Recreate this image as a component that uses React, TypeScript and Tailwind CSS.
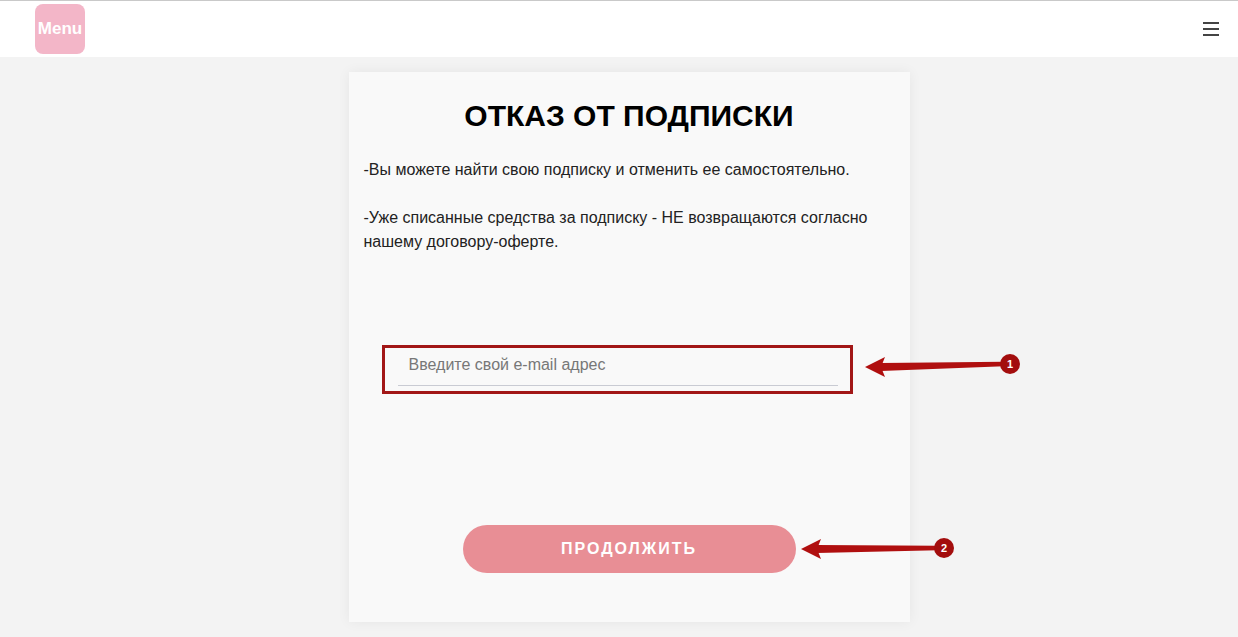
import React from 'react'

const font = { fontFamily: '"Liberation Sans", Arial, sans-serif' }

const Arrow = ({ tipX, tipY, badgeX, badgeY, label }) => {
  const hx = tipX + 20
  return (
    <g>
      <polygon
        points={`${hx - 4},${tipY - 4} ${badgeX - 6},${badgeY - 2.2} ${badgeX - 6},${badgeY + 2.2} ${hx - 4},${tipY + 4}`}
        fill="#b00f0f"
      />
      <polygon
        points={`${tipX},${tipY} ${hx},${tipY - 10} ${hx - 4},${tipY} ${hx},${tipY + 10}`}
        fill="#b00f0f"
      />
      <circle cx={badgeX} cy={badgeY} r="10" fill="#a30d0d" />
      <text
        x={badgeX}
        y={badgeY + 4}
        textAnchor="middle"
        fontSize="11"
        fontWeight="bold"
        fill="#fff"
        fontFamily="Liberation Sans, Arial, sans-serif"
      >
        {label}
      </text>
    </g>
  )
}

const App = () => {
  return (
    <div
      className="relative min-h-screen border-t border-[#c9c9c9] bg-[#f3f3f3]"
      style={font}
    >
      <header className="flex h-[56px] items-center justify-between bg-white pl-[35px] pr-[19px]">
        <div className="flex h-[50px] w-[50px] items-center justify-center rounded-[8px] bg-[#f3b6c8]">
          <span className="text-[17px] font-bold text-white">Menu</span>
        </div>
        <button className="flex w-[16px] flex-col gap-[4.5px]">
          <span className="h-[1.5px] w-full bg-[#444]" />
          <span className="h-[1.5px] w-full bg-[#444]" />
          <span className="h-[1.5px] w-full bg-[#444]" />
        </button>
      </header>

      <div className="flex justify-center pl-[20px] pt-[15px]">
        <main className="flex h-[550px] w-[561px] flex-col bg-[#f9f9f9] px-[15px] shadow-[0_0_12px_rgba(0,0,0,0.06)]">
          <h1 className="mt-[26px] text-center text-[30px] font-bold leading-[36px] text-black">
            ОТКАЗ ОТ ПОДПИСКИ
          </h1>
          <div className="mt-[24px] text-[16px] leading-[24px] text-[#222]">
            <p>-Вы можете найти свою подписку и отменить ее самостоятельно.</p>
            <br />
            <p>
              -Уже списанные средства за подписку - НЕ возвращаются согласно
              нашему договору-оферте.
            </p>
          </div>

          <div className="ml-[18px] mt-[91px] h-[49px] w-[471px] border-[3px] border-[#a21717]">
            <input
              type="email"
              placeholder="Введите свой e-mail адрес"
              className="ml-[13px] h-[38px] w-[440px] border-b border-[#c9cbd3] bg-transparent pb-[4px] pl-[11px] text-[16px] text-[#333] outline-none placeholder:text-[#777]"
            />
          </div>

          <button className="mx-auto mt-[131px] h-[48px] w-[333px] rounded-full bg-[#e88e95] text-[16px] font-bold tracking-[2px] text-white">
            ПРОДОЛЖИТЬ
          </button>
        </main>
      </div>

      <svg className="pointer-events-none absolute left-0 top-0 h-[637px] w-[1238px]">
        <Arrow tipX={865} tipY={366} badgeX={1010} badgeY={363} label="1" />
        <Arrow tipX={801} tipY={548} badgeX={944} badgeY={547} label="2" />
      </svg>
    </div>
  )
}

export default App
